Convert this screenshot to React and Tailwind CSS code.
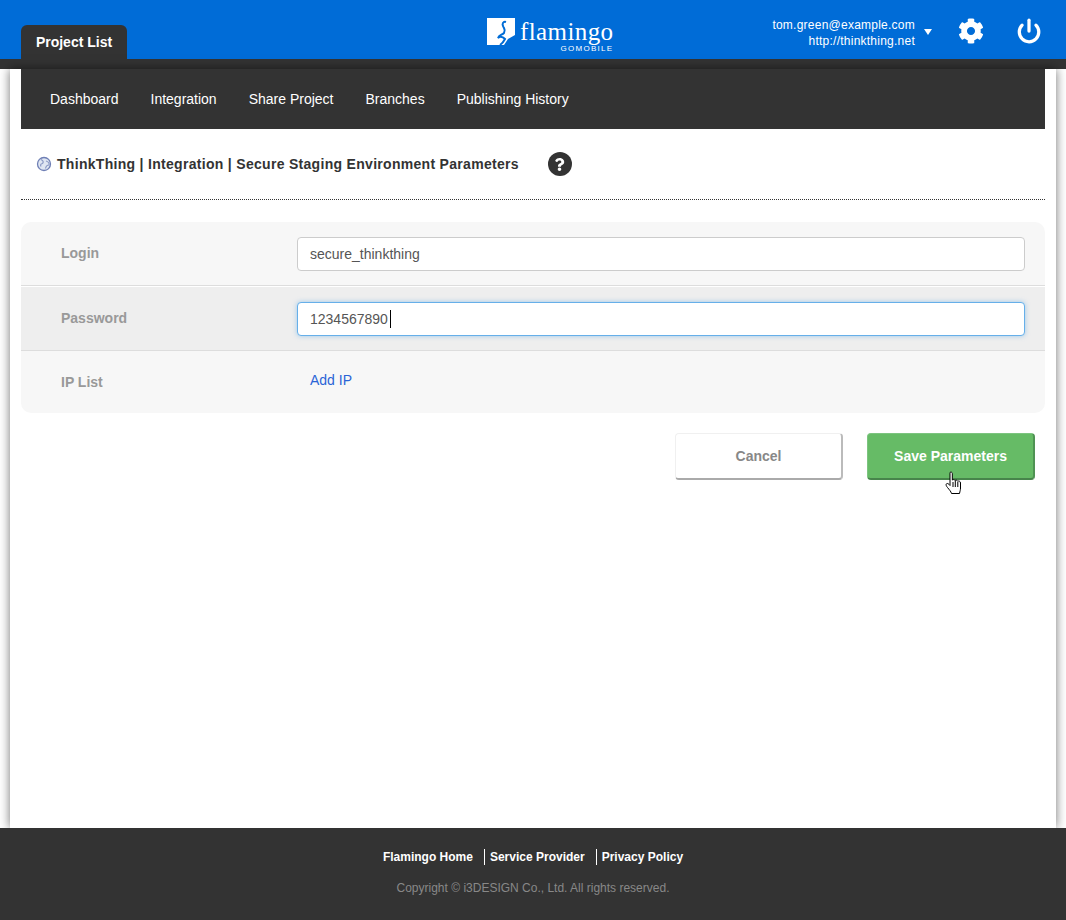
import React from 'react';
import { Power } from 'lucide-react';
import { FaCog, FaQuestion } from 'react-icons/fa';

const navItems = ['Dashboard', 'Integration', 'Share Project', 'Branches', 'Publishing History'];

const Logo = () => (
  <div className="ml-[360px] mt-[18px] flex items-start gap-[4px]">
    <svg width="29" height="28" viewBox="0 0 29 28" className="shrink-0">
      <path d="M0 0H28V17L21 21L17 27H0Z" fill="#fff" />
      <path d="M19 4C16 3 15 6 16 8C17 11 19 11 17 15C15 17 12 17 11 20C13 18 16 19 18 21C17 23 16 25 13 27" fill="none" stroke="#006cd6" strokeWidth="2" />
    </svg>
    <div className="flex flex-col items-end leading-none">
      <span className="font-['Liberation_Serif',serif] text-[25px] leading-[25px] tracking-[0.4px] text-white mt-[1px]">flamingo</span>
      <span className="mt-[1px] text-[8px] leading-[8px] tracking-[1.3px] text-white">GOMOBILE</span>
    </div>
  </div>
);

const HandCursor = () => (
  <svg width="18" height="24" viewBox="0 0 18 24" className="absolute left-[77px] top-[37px]">
    <path
      d="M5 1.5C6 .7 7.3 1.2 7.3 2.6V9C8.5 8.2 9.6 8.5 10 9.5C11.2 8.8 12.2 9.2 12.6 10.2C13.8 9.7 15.5 10.2 15.5 12V17C15.5 19 15 20 14.5 22.5H6.5C6 20.5 4.5 19 2.5 16.5C1.2 15 .6 13.5 1.6 12.7C2.6 12 3.8 13 5 14.5V2.8Z"
      fill="#fff"
      stroke="#000"
      strokeWidth="1"
      strokeLinejoin="round"
    />
    <path d="M8 11V16M10.3 10V16M12.8 11V16" stroke="#000" strokeWidth="1" />
  </svg>
);

const Row = ({ label, className, children }) => (
  <div className={`flex items-center pl-[40px] pr-[20px] ${className}`}>
    <div className="w-[236px] text-[14px] font-bold text-[#999]">{label}</div>
    <div className="flex-1">{children}</div>
  </div>
);

export default function App() {
  return (
    <div className="flex min-h-[920px] w-full flex-col bg-white font-['Liberation_Sans',Arial,sans-serif]">
      <header className="flex h-[59px] shrink-0 items-start bg-[#006cd7] pl-[21px]">
        <div className="mt-[25px] flex h-[34px] w-[106px] items-center justify-center rounded-t-[6px] bg-[#333] text-[14px] font-bold text-white">
          Project List
        </div>
        <Logo />
        <div className="ml-auto mt-[17px] flex items-start text-white">
          <div className="text-right text-[12px] leading-[16px] tracking-[0.02em]">
            <div>tom.green@example.com</div>
            <div>http://thinkthing.net</div>
          </div>
          <div className="ml-[9px] mt-[12px] h-0 w-0 border-x-[4px] border-t-[6px] border-x-transparent border-t-white" />
          <FaCog size={26} className="ml-[26px] mt-[1px]" />
          <Power size={26} strokeWidth={3} className="ml-[32px] mr-[24px] mt-[1px]" />
        </div>
      </header>
      <div className="h-[10px] shrink-0 bg-[#333]" />

      <main className="mx-[10px] flex flex-1 flex-col bg-white px-[11px] shadow-[0_0_10px_rgba(0,0,0,0.55)]">
        <nav className="flex h-[60px] shrink-0 items-center gap-[32px] bg-[#333] px-[29px] text-[14px] text-white">
          {navItems.map((item) => (
            <a key={item} href="#">{item}</a>
          ))}
        </nav>

        <div className="flex h-[71px] shrink-0 items-center border-b border-dotted border-[#333] pl-[15px]">
          <svg width="16" height="16" viewBox="0 0 16 16" className="shrink-0">
            <circle cx="8" cy="8" r="6.5" fill="#dfe6f2" stroke="#6f7fb5" strokeWidth="1.3" />
            <path d="M5 3.5C7 4.5 8 6 6.5 7.5C5 8 4 8.5 5 10.5M10 5C12 5.5 13.5 7 13 9C11.5 9 10 10 9.5 12.5" fill="none" stroke="#8c9ac5" strokeWidth="1.2" />
          </svg>
          <h1 className="ml-[5px] text-[14px] font-bold tracking-[0.3px] text-[#333]">
            ThinkThing | Integration | Secure Staging Environment Parameters
          </h1>
          <div className="ml-[29px] flex h-[24px] w-[24px] items-center justify-center rounded-full bg-[#333] text-white">
            <FaQuestion size={13} />
          </div>
        </div>

        <form className="mt-[22px] overflow-hidden rounded-[10px] bg-[#f7f7f7]">
          <Row label="Login" className="h-[64px] border-b border-[#ddd]">
            <input
              readOnly
              value="secure_thinkthing"
              className="h-[34px] w-full rounded-[4px] border border-[#ccc] bg-white px-[12px] text-[14px] text-[#555] outline-none"
            />
          </Row>
          <Row label="Password" className="h-[65px] border-b border-[#ddd] border-t border-t-white bg-[#eee]">
            <div className="relative">
              <input
                readOnly
                value="1234567890"
                className="h-[34px] w-full rounded-[4px] border border-[#66afe9] bg-white px-[12px] text-[14px] text-[#555] shadow-[0_0_5px_rgba(102,175,233,0.6)] outline-none"
              />
              <span className="absolute left-[93px] top-[8px] h-[18px] w-px bg-black" />
            </div>
          </Row>
          <Row label="IP List" className="h-[62px]">
            <a href="#" className="relative -top-[2px] ml-[13px] text-[14px] text-[#2a64d6]">Add IP</a>
          </Row>
        </form>

        <div className="mt-[20px] flex justify-end gap-[24px] pr-[10px]">
          <button type="button" className="h-[47px] w-[168px] rounded-[4px] border border-[#f0f0f0] border-b-2 border-r-2 border-b-[#aaa] border-r-[#bbb] bg-white text-[14px] font-bold text-[#888]">
            Cancel
          </button>
          <button type="button" className="relative h-[47px] w-[168px] rounded-[4px] border border-[#7cc47f] border-b-2 border-r-2 border-b-[#47854b] border-r-[#4f9353] bg-[#66bb66] text-[14px] font-bold text-white">
            Save Parameters
            <HandCursor />
          </button>
        </div>
      </main>

      <footer className="flex h-[92px] shrink-0 flex-col items-center bg-[#333] pt-[21px]">
        <div className="flex text-[12px] font-bold leading-[16px] text-white">
          <a href="#">Flamingo Home</a>
          <a href="#" className="ml-[11px] border-l border-white pl-[5px]">Service Provider</a>
          <a href="#" className="ml-[11px] border-l border-white pl-[5px]">Privacy Policy</a>
        </div>
        <p className="mt-[15px] text-[12px] leading-[16px] text-[#888]">Copyright © i3DESIGN Co., Ltd. All rights reserved.</p>
      </footer>
    </div>
  );
}
